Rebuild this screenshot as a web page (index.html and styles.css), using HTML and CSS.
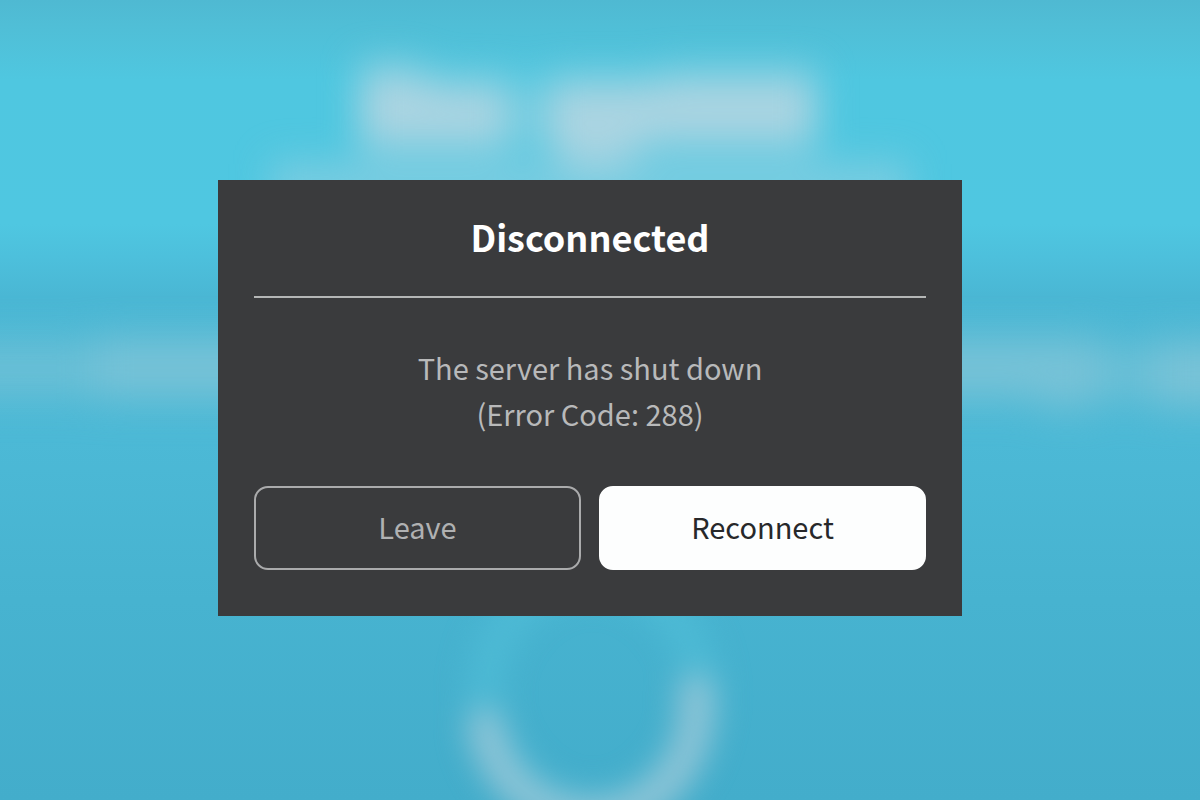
FILE: index.html
```
<!DOCTYPE html>
<html lang="en">
<head>
    <meta charset="UTF-8">
    <meta name="viewport" content="width=device-width, initial-scale=1.0">
    <title>Disconnected</title>
    <link rel="stylesheet" href="styles.css">
</head>
<body>
    <!-- Blurred game screen -->
    <svg class="backdrop" viewBox="0 0 1200 800" preserveAspectRatio="none" aria-hidden="true">
        <defs>
            <filter id="soft" x="-20%" y="-60%" width="140%" height="220%" color-interpolation-filters="sRGB">
                <feGaussianBlur stdDeviation="18 20"/>
            </filter>
            <filter id="ring-soft" x="-30%" y="-30%" width="160%" height="160%" color-interpolation-filters="sRGB">
                <feGaussianBlur stdDeviation="15"/>
            </filter>
        </defs>
        <g filter="url(#soft)" fill="#abd4e1">
            <path d="M360 68h50l30 14h66v66H360z"/>
            <path d="M500 84h54v64h-54z" opacity=".4"/>
            <path d="M550 80h100l20-6h146v72H650l-30 18h-50l-20-16z"/>
            <path d="M270 164h640v48H270z" opacity=".5"/>
        </g>
        <g filter="url(#soft)" fill="#80c4d7">
            <path d="M-60 342H95v54H-60z" opacity=".6"/>
            <path d="M95 338h190v60H95z" opacity=".85"/>
            <path d="M900 338h200v54l-10 16h-40l-20-10H900z" opacity=".85"/>
            <path d="M1100 346h55v54h-55z" opacity=".6"/>
            <path d="M1155 342h110v64h-110z" opacity=".9"/>
        </g>
        <g filter="url(#ring-soft)" fill="none" stroke-width="36">
            <ellipse cx="593" cy="694" rx="108" ry="116" stroke="#52bfd9" opacity=".6"/>
            <path d="M485 726c12 58 56 90 108 90 60 0 110-54 103-124" stroke="#8dc4d6" stroke-linecap="round"/>
        </g>
    </svg>

    <main class="dialog" role="alertdialog" aria-labelledby="dialog-title" aria-describedby="dialog-message">
        <h1 class="dialog-title" id="dialog-title">Disconnected</h1>
        <p class="dialog-message" id="dialog-message">The server has shut down<br>(Error Code: 288)</p>
        <div class="dialog-actions">
            <button type="button" class="btn btn-outline">Leave</button>
            <button type="button" class="btn btn-primary">Reconnect</button>
        </div>
    </main>
</body>
</html>
```
FILE: styles.css
```
* {
    margin: 0;
    padding: 0;
    box-sizing: border-box;
    font-family: 'Noto Sans CJK SC', sans-serif;
}
body {
    min-height: 100vh;
    display: flex;
    justify-content: center;
    align-items: center;
    padding: 0 20px 4px 0;
    overflow: hidden;
    background: linear-gradient(#4fb9d2 0%, #50bed6 3%, #4fc7e0 10%, #4fc7e1 28%, #4dc0dc 32%, #4ab7d4 37%, #4cb9d6 55%, #47b3d0 75%, #43adcb 100%);
}
.backdrop {
    position: fixed;
    top: 0;
    left: 0;
    width: 100%;
    height: 100%;
}
.dialog {
    position: relative;
    width: 100%;
    max-width: 744px;
    padding: 0 36px 46px;
    background-color: #3a3b3d;
    text-align: center;
}
.dialog-title {
    padding: 30px 0 34px;
    border-bottom: 2px solid #b4b6b6;
    color: #fff;
    font-size: 36px;
    font-weight: 600;
    line-height: 52px;
}
.dialog-message {
    padding: 46px 0 50px;
    color: #b8b9ba;
    font-size: 29px;
    line-height: 46px;
}
.dialog-actions {
    display: flex;
    gap: 18px;
}
.btn {
    flex: 1;
    height: 84px;
    padding-bottom: 4px;
    border: 2px solid #fdfefe;
    border-radius: 14px;
    font-size: 29px;
    cursor: pointer;
}
.btn-outline {
    border-color: #aaabac;
    background-color: transparent;
    color: #b0b1b2;
}
.btn-outline:hover {
    background-color: #46474a;
}
.btn-primary {
    background-color: #fdfefe;
    color: #27282a;
}
.btn-primary:hover {
    background-color: #e6e7e8;
}
```
